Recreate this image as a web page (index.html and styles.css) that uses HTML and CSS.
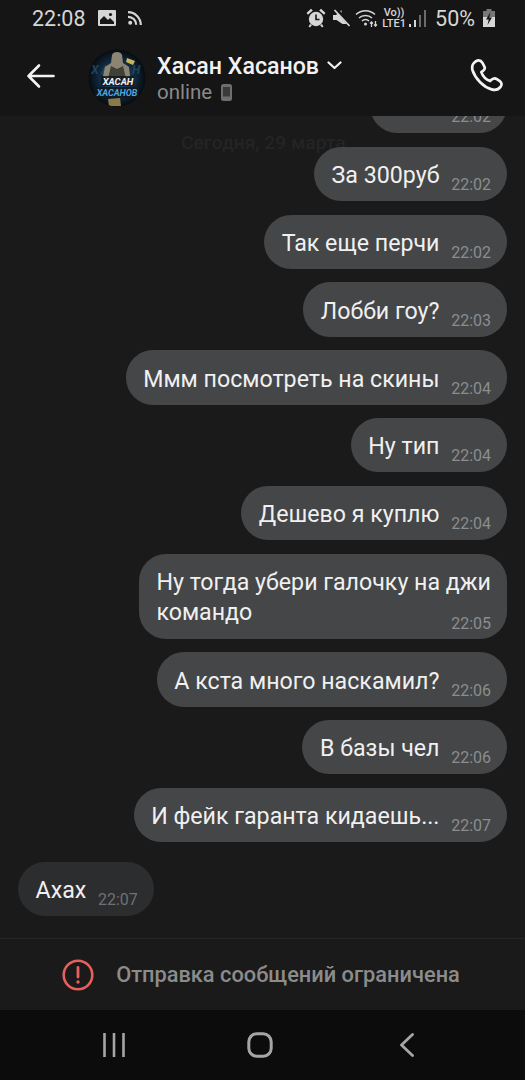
FILE: index.html
```html
<!DOCTYPE html>
<html lang="en">
<head>
    <meta charset="UTF-8">
    <meta name="viewport" content="width=device-width, initial-scale=1.0">
    <title>Хасан Хасанов</title>
    <link rel="stylesheet" href="styles.css">
</head>
<body>
    <div class="phone">
        <div class="status-bar">
            <div class="status-left">
                <span class="clock">22:08</span>
                <svg class="ic" width="18" height="16" viewBox="0 0 18 16"><path fill="#d6d6d6" d="M1 0h16a1 1 0 0 1 1 1v14a1 1 0 0 1-1 1H1a1 1 0 0 1-1-1V1a1 1 0 0 1 1-1z"/><path fill="#161616" d="M2 10l4-4 4 4 2-2 4 4v2H2z"/><circle cx="12.5" cy="4.5" r="1.6" fill="#161616"/></svg>
                <svg class="ic rss" width="14" height="14" viewBox="0 0 14 14"><circle cx="2.2" cy="11.8" r="2" fill="#d6d6d6"/><path fill="none" stroke="#d6d6d6" stroke-width="2.2" d="M0 5.800a8 8 0 0 1 8.200 8M0 1.200a12.800 12.800 0 0 1 12.800 12.800"/></svg>
            </div>
            <div class="status-right">
                <svg class="alarm" width="20" height="20" viewBox="0 0 20 20"><circle cx="10" cy="11" r="7.2" fill="#d6d6d6"/><path fill="none" stroke="#161616" stroke-width="1.6" d="M10 6.500V11.500H13.500"/><path fill="#d6d6d6" d="M0.500 5L5 0.800 6.800 2.500 2 6.800zM19.500 5L15 0.800 13.200 2.500 18 6.800zM4 16l2 1-2 2.500-1.400-1zM16 16l-2 1 2 2.500 1.400-1z"/></svg>
                <svg class="mute" width="18" height="18" viewBox="0 0 18 18"><path fill="#d6d6d6" d="M0 6h3L8.500 1v5l7 8v1H9.500L3.500 11H0z"/><path stroke="#151515" stroke-width="3.400" d="M3.500 0.500l13.500 16"/><path stroke="#d6d6d6" stroke-width="1.800" d="M1.500 1l15 16"/></svg>
                <svg width="23" height="20" viewBox="0 0 23 20"><path fill="none" stroke="#d6d6d6" stroke-width="1.600" d="M1 6.500a14 14 0 0 1 19 0M4 10a9.500 9.500 0 0 1 13 0M7 13a5 5 0 0 1 7 0"/><circle cx="10.500" cy="16" r="1.500" fill="#d6d6d6"/><path fill="none" stroke="#d6d6d6" stroke-width="1.300" d="M16.500 19v-5M15 15.500l1.500-1.500 1.500 1.500M20.500 13v5M19 16.500l1.500 1.500 1.500-1.500"/></svg>
                <span class="volte"><span>Vo))</span><span>LTE1</span></span>
                <div class="signal">
                    <i class="bar bar-1"></i><i class="bar bar-2"></i><i class="bar bar-3"></i><i class="bar bar-4"></i>
                </div>
                <span class="battery-text">50%</span>
                <svg width="12" height="18" viewBox="0 0 12 18"><path fill="#777" d="M3.500 0h5v2h3.500v6H0V2h3.500z"/><path fill="#d6d6d6" d="M0 8h12v10H0z"/><path fill="#161616" d="M7.500 3L3 10.500h2.700L4.500 16 9 8.500H6.300z"/></svg>
            </div>
        </div>

        <header class="chat-header">
            <svg class="back" width="30" height="26" viewBox="0 0 30 26"><path fill="none" stroke="#f2f2f2" stroke-width="2.600" stroke-linecap="round" stroke-linejoin="round" d="M27.500 13H2.500M13 2.500L2.500 13 13 23.500"/></svg>
            <svg class="avatar" width="58" height="58" viewBox="0 0 58 58">
                <defs>
                    <clipPath id="round"><circle cx="29" cy="29" r="28.500"/></clipPath>
                    <radialGradient id="glow" cx="50%" cy="50%" r="50%">
                        <stop offset="0" stop-color="#24557a"/>
                        <stop offset=".65" stop-color="#10283c"/>
                        <stop offset="1" stop-color="#070b10"/>
                    </radialGradient>
                </defs>
                <circle cx="29" cy="29" r="28.500" fill="url(#glow)"/>
                <g clip-path="url(#round)">
                    <text class="avatar-back" x="29" y="25" text-anchor="middle">ХАСАН</text>
                    <path fill="#8d8574" d="M24 6c1-4 9-4 10 0l1 8 6 4 1 9-3 2H18l-3-2 2-9 6-4z"/>
                    <path fill="#3f4038" d="M23 17l6 3 6-3 3 12H20z"/>
                    <path fill="#c9b45a" d="M39 9l8 3-2 4-7-3z"/>
                    <path fill="#12171d" d="M13 27h33v10H13zM7 38h44v11H7z" opacity=".85"/>
                    <path fill="#8a7a4a" d="M20 50l12-1 1 8H21z"/>
                </g>
                <text class="avatar-top" x="30" y="36" text-anchor="middle">ХАСАН</text>
                <text class="avatar-bottom" x="29" y="47" text-anchor="middle">ХАСАНОВ</text>
            </svg>
            <div class="peer">
                <div class="peer-name">Хасан Хасанов
                    <svg width="15" height="9" viewBox="0 0 15 9"><path fill="none" stroke="#f2f2f2" stroke-width="2.200" stroke-linecap="round" stroke-linejoin="round" d="M1.500 1.500l6 5.500 6-5.500"/></svg>
                </div>
                <div class="peer-status">online
                    <svg width="11" height="17" viewBox="0 0 11 17"><rect width="11" height="17" rx="2.500" fill="#6e6e6e"/><rect x="2" y="3" width="7" height="9.500" fill="#3a3a3a"/></svg>
                </div>
            </div>
            <svg class="call" width="34" height="34" viewBox="0 0 34 34"><path fill="none" stroke="#f2f2f2" stroke-width="2.700" stroke-linejoin="round" d="M5.500 2.500c3-1.700 5.500-1 6.800 1.200l2 3.600c1 1.900.5 3.300-1.300 4.600l-1.700 1.200c1.400 4 4.600 7.400 8.800 9l1.700-1.500c1.700-1.500 3.200-1.700 5-.5l3 2c2 1.500 2.300 3.800.7 5.800-2 2.700-5.400 3.600-9 2.500C13.500 28 5.500 20 2.600 11.500c-1-3.500 0-7 2.900-9z"/></svg>
        </header>

        <main class="chat">
            <div class="date-label">Сегодня, 29 марта</div>
            <div class="bubble out clipped"><span class="time">22:02</span></div>
            <div class="bubble out"><span class="text">За 300руб</span><span class="time">22:02</span></div>
            <div class="bubble out"><span class="text">Так еще перчи</span><span class="time">22:02</span></div>
            <div class="bubble out"><span class="text">Лобби гоу?</span><span class="time">22:03</span></div>
            <div class="bubble out"><span class="text">Ммм посмотреть на скины</span><span class="time">22:04</span></div>
            <div class="bubble out"><span class="text">Ну тип</span><span class="time">22:04</span></div>
            <div class="bubble out"><span class="text">Дешево я куплю</span><span class="time">22:04</span></div>
            <div class="bubble out long"><span class="text">Ну тогда убери галочку на джи<br>командо</span><span class="time">22:05</span></div>
            <div class="bubble out"><span class="text">А кста много наскамил?</span><span class="time">22:06</span></div>
            <div class="bubble out"><span class="text">В базы чел</span><span class="time">22:06</span></div>
            <div class="bubble out"><span class="text">И фейк гаранта кидаешь...</span><span class="time">22:07</span></div>
            <div class="bubble in"><span class="text">Ахах</span><span class="time">22:07</span></div>
        </main>

        <div class="restricted">
            <svg width="32" height="32" viewBox="0 0 32 32"><circle cx="16" cy="16" r="14.300" fill="none" stroke="#e8605c" stroke-width="2.600"/><path stroke="#e8605c" stroke-width="2.800" stroke-linecap="round" d="M16 8.500v9.500"/><circle cx="16" cy="23" r="1.700" fill="#e8605c"/></svg>
            <span>Отправка сообщений ограничена</span>
        </div>

        <nav class="nav-bar">
            <svg width="24" height="24" viewBox="0 0 24 24"><path stroke="#a6a6a6" stroke-width="2.600" d="M2.500 0v24M12 0v24M21.500 0v24"/></svg>
            <svg class="nav-home" width="26" height="26" viewBox="0 0 26 26"><rect x="1.800" y="1.800" width="22.400" height="22.400" rx="8" fill="none" stroke="#a6a6a6" stroke-width="3"/></svg>
            <svg width="16" height="24" viewBox="0 0 16 24"><path fill="none" stroke="#a6a6a6" stroke-width="2.800" stroke-linecap="round" stroke-linejoin="round" d="M13.500 1.500L2.500 12l11 10.500"/></svg>
        </nav>
    </div>
</body>
</html>
```

FILE: styles.css
```css
body {
    margin: 0;
    background-color: #1a1a1a;
    font-family: Roboto, "Liberation Sans", sans-serif;
}

.phone {
    width: 525px;
    height: 1080px;
    display: flex;
    flex-direction: column;
    overflow: hidden;
    background-color: #1a1a1a;
}

.status-bar {
    height: 36px;
    flex-shrink: 0;
    display: flex;
    align-items: center;
    justify-content: space-between;
    padding: 0 30px 0 32px;
    background-color: #151515;
    color: #d6d6d6;
}

.status-left, .status-right {
    display: flex;
    align-items: center;
}

.clock {
    font-size: 21.5px;
    margin-right: 12px;
}

.rss {
    margin-left: 12px;
}

.status-right {
    gap: 5px;
}

.alarm {
    margin-right: 2px;
}

.mute {
    margin-right: -1px;
}

.volte {
    display: flex;
    flex-direction: column;
    align-items: center;
    width: 22px;
    margin-right: -1px;
    font-size: 11px;
    line-height: 11px;
    font-weight: 500;
}

.signal {
    display: flex;
    align-items: flex-end;
    gap: 3px;
    height: 17px;
    margin-right: 4px;
}

.bar {
    width: 2px;
    background-color: #6b6b6b;
}

.bar-1 { height: 3px; background-color: #d6d6d6; }
.bar-2 { height: 7px; background-color: #d6d6d6; }
.bar-3 { height: 12px; }
.bar-4 { height: 17px; }

.battery-text {
    font-size: 21.5px;
    margin-right: 3px;
}

.chat-header {
    height: 80px;
    flex-shrink: 0;
    display: flex;
    align-items: center;
    padding: 0 21px 0 26px;
    background-color: #151515;
    position: relative;
    z-index: 1;
}

.avatar {
    margin: 4px 0 0 32px;
}

.avatar-back {
    font: italic 700 12px Roboto, sans-serif;
    fill: #1f4560;
    letter-spacing: 2.500px;
}

.avatar-top {
    font: italic 700 9.500px Roboto, sans-serif;
    fill: #f2f2f2;
}

.avatar-bottom {
    font: italic 700 9px Roboto, sans-serif;
    fill: #4aa8e0;
}

.peer {
    flex: 1;
    margin-left: 11px;
    padding-top: 6px;
}

.peer-name {
    font-size: 23.2px;
    font-weight: 500;
    line-height: 26px;
    color: #f2f2f2;
}

.peer-name svg {
    margin-left: 2px;
    vertical-align: 4px;
}

.peer-status {
    font-size: 20.500px;
    line-height: 26px;
    color: #8a8a8a;
}

.peer-status svg {
    margin-left: 4px;
    vertical-align: -2px;
}

.chat {
    flex: 1;
    min-height: 0;
    display: flex;
    flex-direction: column;
    justify-content: flex-end;
    align-items: flex-end;
    gap: 13.450px;
    padding: 0 18px 22px 18px;
    overflow: hidden;
    position: relative;
}

.date-label {
    position: absolute;
    top: 15px;
    left: 181px;
    font-size: 19.200px;
    font-weight: 500;
    color: #242424;
}

.bubble {
    flex-shrink: 0;
    position: relative;
    display: flex;
    align-items: flex-end;
    gap: 11.700px;
    min-height: 54.400px;
    box-sizing: border-box;
    padding: 0 16px 0 17.500px;
    border-radius: 27px;
    color: #f0f0f0;
    font-size: 23.200px;
}

.out {
    background-color: #444648;
}

.in {
    align-self: flex-start;
    background-color: #2b2d2f;
    margin-top: 6px;
}

.clipped {
    width: 137px;
    justify-content: flex-end;
}

.text {
    line-height: 30px;
    padding-bottom: 11px;
}

.time {
    font-size: 16px;
    line-height: 20px;
    padding-bottom: 6px;
    color: #8b8d8e;
}

.long {
    display: block;
    padding-top: 13px;
    padding-bottom: 5px;
    border-radius: 27px;
}

.long .text {
    display: block;
    padding-bottom: 0;
}

.long .time {
    display: block;
    text-align: right;
    padding-bottom: 0;
    margin-top: -13px;
}

.in .time {
    color: #6f7173;
}

.restricted {
    height: 71px;
    flex-shrink: 0;
    display: flex;
    align-items: center;
    justify-content: center;
    gap: 22px;
    padding-right: 3px;
    border-top: 1px solid #262626;
    color: #8c8c8c;
    font-size: 21.800px;
    font-weight: 500;
}

.nav-bar {
    height: 70px;
    flex-shrink: 0;
    display: flex;
    align-items: center;
    padding-left: 102px;
    background-color: #0c0c0c;
}

.nav-home {
    margin: 0 126px 0 121px;
}
```
